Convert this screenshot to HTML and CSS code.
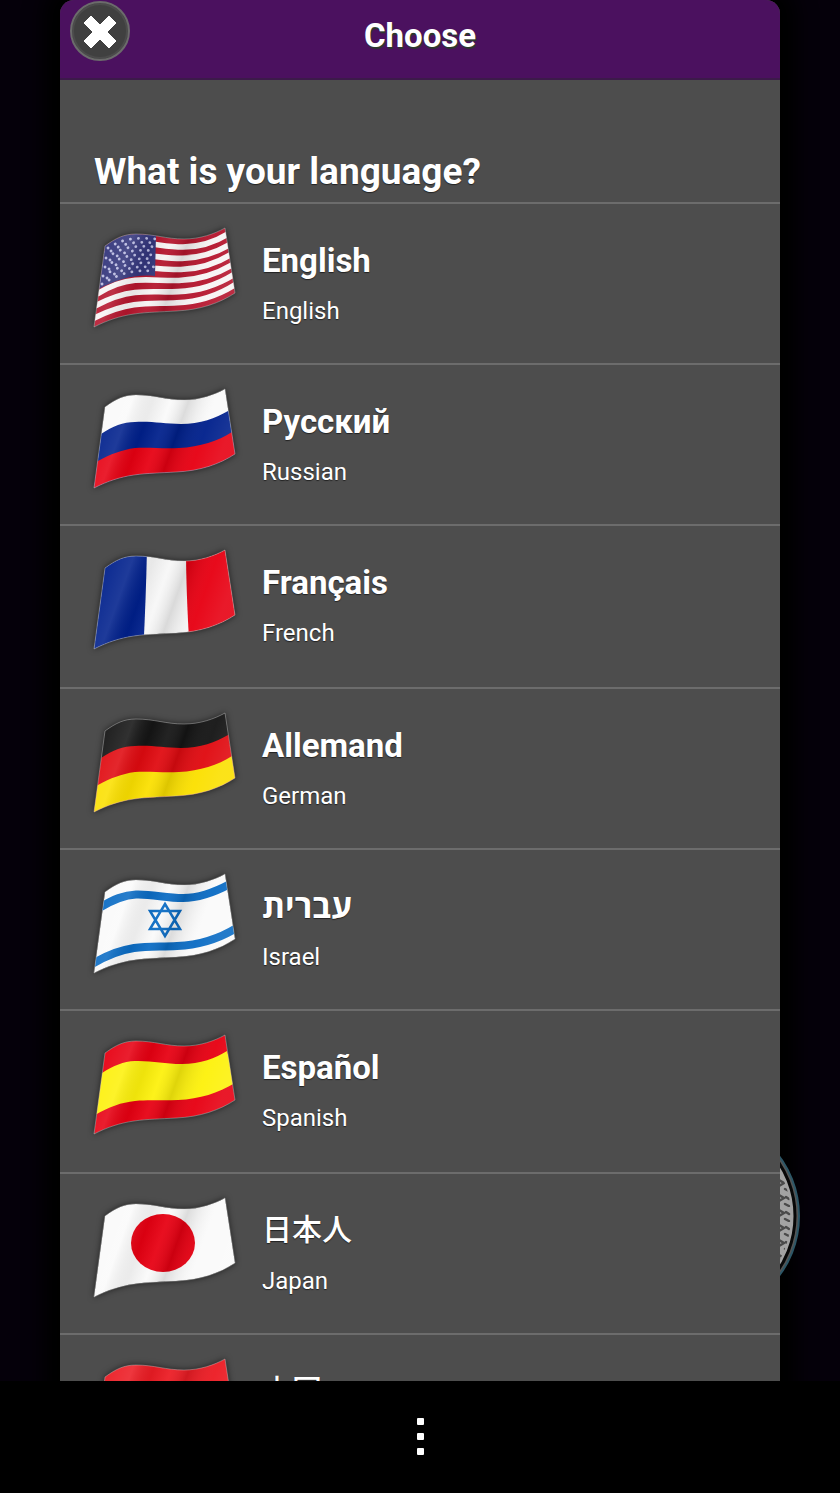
FILE: index.html
```html
<!DOCTYPE html>
<html lang="en">
<head>
<meta charset="utf-8">
<meta name="viewport" content="width=device-width, initial-scale=1">
<title>Choose</title>
<link rel="stylesheet" href="styles.css">
</head>
<body>
<svg class="defs" aria-hidden="true">
  <defs>
    <path id="cloth" d="M13 20C24 12 32 8 44 8C62 8 74 13 92 13C108 13 122 8 133 2L143 67C128 77 108 84 84 85C68 86 56 86 42 88C28 90 16 94 2 101Z"/>
    <clipPath id="wave"><use href="#cloth"/></clipPath>
    <path id="third1" d="M9 47C21 39 31 35 43 35C60 34 72 37 89 37C108 37 124 31 136 24L150 20V110H0V50Z"/>
    <path id="third2" d="M6 74C19 67 29 63 43 61C58 60 70 62 87 61C108 60 126 54 140 45L150 40V110H0V78Z"/>
    <linearGradient id="shade" x1="0" y1="0" x2="1" y2="0.25">
      <stop offset="0" stop-color="#fff" stop-opacity="0"/>
      <stop offset="0.28" stop-color="#fff" stop-opacity="0.12"/>
      <stop offset="0.42" stop-color="#000" stop-opacity="0.06"/>
      <stop offset="0.54" stop-color="#fff" stop-opacity="0.06"/>
      <stop offset="0.66" stop-color="#000" stop-opacity="0.12"/>
      <stop offset="0.84" stop-color="#fff" stop-opacity="0.04"/>
      <stop offset="1" stop-color="#fff" stop-opacity="0.1"/>
    </linearGradient>
    <g id="finish">
      <use href="#cloth" fill="url(#shade)"/>
      <use href="#cloth" fill="none" stroke="#ccc" stroke-opacity="0.4" stroke-width="1"/>
    </g>
  </defs>
</svg>

<div class="app">
  <main class="stage">
    <svg class="moon" viewBox="0 0 204 204" aria-hidden="true">
      <defs>
        <pattern id="engraving" width="14" height="15" patternUnits="userSpaceOnUse" patternTransform="translate(182 3)">
          <path d="M0 3L5 6L0 9M6 12L10 14M7 5L10 7" fill="none" stroke="#4a4a4a" stroke-width="2.5" stroke-linecap="round"/>
        </pattern>
      </defs>
      <circle cx="102" cy="102" r="100" fill="#555" stroke="#2d5666" stroke-width="2"/>
      <circle cx="102" cy="102" r="96" fill="#a3a3a3" stroke="#080808" stroke-width="3"/>
      <circle cx="102" cy="102" r="92" fill="url(#engraving)"/>
    </svg>
    <section class="dialog" aria-labelledby="dialog-title">
      <header class="dialog-header">
        <button class="close" type="button" aria-label="Close">
          <svg viewBox="0 0 56 56" aria-hidden="true"><path d="M19 13L28 22L37 13L44 20L35 29L44 38L37 45L28 36L19 45L12 38L21 29L12 20Z" fill="#fff" stroke="#fff" stroke-width="1" stroke-linejoin="round"/></svg>
        </button>
        <h1 id="dialog-title">Choose</h1>
      </header>
      <h2 class="question">What is your language?</h2>
      <ul class="languages">
        <li><button class="language" type="button">
          <svg class="flag" viewBox="0 0 148 108" aria-hidden="true">
            <g clip-path="url(#wave)">
              <use href="#cloth" fill="#b5152d"/>
              <g fill="none" stroke="#f7f4f4" stroke-width="5.6">
                <path d="M12 29C23 21 32 17.500 44 17C61 17 73 21 91 21C108 21 123 16 136 8"/>
                <path d="M10 42C22 34 31 30 43 29.500C60 29 72 32.500 90 32.400C108 32 124 26.600 138 18.500"/>
                <path d="M7 55C21 46.700 30 42.700 43 41.800C59 41 71 44 89 43.500C108 43 125 37 139 28.500"/>
                <path d="M5 68C19 59.300 30 55.300 43 54.200C59 53 71 55 87 54.500C108 54 125 47.800 141 38.500"/>
                <path d="M3 80C18 72 29 68 43 66.500C58 65 70 66.400 86 65.600C108 65 126 58.400 142 48.500"/>
                <path d="M0 93C17 84.600 28 80.600 42 78.800C57 77 69 77.600 85 76.700C108 75.800 127 69 144 58"/>
              </g>
              <path d="M13 20C24 12 32 8 44 8L64 9L63 50C44 48 25 53 5 64Z" fill="#33357b"/>
              <g fill="none" stroke="#b9bae0" stroke-width="2.8" stroke-linecap="round" stroke-dasharray="0.1 8">
                <path d="M16 22C30 13 42 11 63 13"/>
                <path d="M19 25C32 17 43 15 63 17"/>
                <path d="M14 32C30 21 42 19 63 21"/>
                <path d="M18 34C32 25 43 23 63 25"/>
                <path d="M13 41C30 29 42 28 63 29"/>
                <path d="M17 43C32 33 43 32 63 33"/>
                <path d="M11 50C30 38 42 36 63 37"/>
                <path d="M15 52C32 42 43 40 63 41"/>
                <path d="M10 58C30 46 42 44 63 45"/>
              </g>
            </g>
            <use href="#finish"/>
          </svg>
          <span class="names"><strong class="native">English</strong><span class="local">English</span></span>
        </button></li>
        <li><button class="language" type="button">
          <svg class="flag" viewBox="0 0 148 108" aria-hidden="true">
            <g clip-path="url(#wave)"><use href="#cloth" fill="#fafafa"/><use href="#third1" fill="#00208c"/><use href="#third2" fill="#e70012"/></g>
            <use href="#finish"/>
          </svg>
          <span class="names"><strong class="native" lang="ru">Русский</strong><span class="local">Russian</span></span>
        </button></li>
        <li><button class="language" type="button">
          <svg class="flag" viewBox="0 0 148 108" aria-hidden="true">
            <g clip-path="url(#wave)"><use href="#cloth" fill="#f7f7f7"/><path d="M0 0H55Q54 50 51 108H0Z" fill="#00208c"/><path d="M94 0Q94 45 98 108H148V0Z" fill="#e70012"/></g>
            <use href="#finish"/>
          </svg>
          <span class="names"><strong class="native" lang="fr">Français</strong><span class="local">French</span></span>
        </button></li>
        <li><button class="language" type="button">
          <svg class="flag" viewBox="0 0 148 108" aria-hidden="true">
            <g clip-path="url(#wave)"><use href="#cloth" fill="#151515"/><use href="#third1" fill="#e00a10"/><use href="#third2" fill="#fbe000"/></g>
            <use href="#finish"/>
          </svg>
          <span class="names"><strong class="native">Allemand</strong><span class="local">German</span></span>
        </button></li>
        <li><button class="language" type="button">
          <svg class="flag" viewBox="0 0 148 108" aria-hidden="true">
            <g clip-path="url(#wave)"><use href="#cloth" fill="#fafafa"/>
              <g fill="none" stroke="#0b6cc4">
                <path d="M7 36C22 27 32 23 44 22.500C61 22 73 26 91 26C108 26 123 20 138 12" stroke-width="8"/>
                <path d="M0 92C17 82 28 78 42 76C57 74 69 75 85 74C108 73 127 67 146 55" stroke-width="8"/>
                <path d="M73 32L88 57L58 57ZM73 64L58 39L88 39Z" stroke-width="2.5"/>
              </g>
            </g>
            <use href="#finish"/>
          </svg>
          <span class="names"><strong class="native" lang="he">עברית</strong><span class="local">Israel</span></span>
        </button></li>
        <li><button class="language" type="button">
          <svg class="flag" viewBox="0 0 148 108" aria-hidden="true">
            <g clip-path="url(#wave)"><use href="#cloth" fill="#e70012"/>
              <path d="M10 40C22 32.500 31 28.500 43 28C60 27.500 72 31 90 31C108 31 124 25 135 18L143 50C126 60 108 66 86 67C70 68 58 66.500 43 68C29 69.500 18 73.500 3 82Z" fill="#fdf10c"/></g>
            <use href="#finish"/>
          </svg>
          <span class="names"><strong class="native" lang="es">Español</strong><span class="local">Spanish</span></span>
        </button></li>
        <li><button class="language" type="button">
          <svg class="flag" viewBox="0 0 148 108" aria-hidden="true">
            <g clip-path="url(#wave)"><use href="#cloth" fill="#fafafa"/><ellipse cx="71" cy="47" rx="32" ry="29" fill="#e70012"/></g>
            <use href="#finish"/>
          </svg>
          <span class="names"><strong class="native cjk" lang="ja">日本人</strong><span class="local">Japan</span></span>
        </button></li>
        <li><button class="language" type="button">
          <svg class="flag" viewBox="0 0 148 108" aria-hidden="true">
            <use href="#cloth" fill="#ec1c24"/>
            <use href="#finish"/>
          </svg>
          <span class="names"><strong class="native cjk" lang="zh">中国</strong></span>
        </button></li>
      </ul>
    </section>
  </main>
  <nav class="system-bar">
    <button class="more" type="button" aria-label="More options"><i></i><i></i><i></i></button>
  </nav>
</div>
</body>
</html>
```
FILE: styles.css
```css
* {
  box-sizing: border-box;
}

body {
  margin: 0;
  background: #000;
  color: #fff;
  font-family: Roboto, "Noto Sans", "Open Sans", "DejaVu Sans", sans-serif;
}

button {
  margin: 0;
  padding: 0;
  border: 0;
  background: none;
  color: inherit;
  font: inherit;
  cursor: pointer;
}

.defs {
  position: absolute;
  width: 0;
  height: 0;
}

.app {
  display: flex;
  flex-direction: column;
  height: 100vh;
}

.stage {
  position: relative;
  flex: 1;
  min-height: 0;
  padding: 0 60px;
  overflow: hidden;
  background: #05000a;
}

.moon {
  position: absolute;
  right: 39px;
  bottom: 63px;
  z-index: 1;
  width: 204px;
  height: 204px;
}

.dialog {
  min-height: 100%;
  border-radius: 14px 14px 0 0;
  background: #4d4d4d;
  box-shadow: 0 0 20px 16px #000;
}

.dialog-header,
.question,
.languages {
  position: relative;
  z-index: 2;
  background: #4d4d4d;
}

.dialog-header {
  display: grid;
  grid-template-columns: 60px 1fr 60px;
  align-items: start;
  height: 80px;
  padding: 1px 10px 0;
  border-bottom: 2px solid #3c1a4a;
  border-radius: 14px 14px 0 0;
  background: #4b115f;
}

.close {
  width: 60px;
  height: 60px;
  border: 2px solid #6b6b6b;
  border-radius: 50%;
  background: #404040;
  box-shadow: inset 0 0 0 2px #4b4b4b;
}

.close svg {
  display: block;
  width: 100%;
}

.dialog-header h1 {
  margin: 0;
  padding-top: 15px;
  font-size: 33px;
  line-height: 40px;
  text-align: center;
  text-shadow: 1px 2px 1px #2c3a2c;
}

.question {
  margin: 0;
  padding: 68px 34px 6px;
  font-size: 37px;
  line-height: 48px;
  text-shadow: 0 1px 1px #222;
}

.languages {
  margin: 0;
  padding: 0;
  list-style: none;
}

.languages li {
  height: 161px;
  border-top: 2px solid #6c6c6c;
}

.languages li:nth-child(3n) {
  height: 163px;
}

.language {
  display: flex;
  align-items: flex-start;
  gap: 22px;
  width: 100%;
  height: 100%;
  padding: 22px 32px 0;
  text-align: left;
}

.flag {
  flex: none;
  width: 148px;
  height: 108px;
  filter: drop-shadow(0 0 3px rgba(0, 0, 0, 0.6));
}

.names {
  display: flex;
  flex-direction: column;
  gap: 15px;
  padding-top: 15px;
  text-shadow: 0 1px 1px #222;
}

.native {
  font-size: 33px;
  line-height: 40px;
}

.cjk {
  padding-bottom: 8px;
  font-family: "Noto Sans CJK JP", sans-serif;
  font-size: 30px;
  font-weight: 500;
  line-height: 32px;
}

.local {
  font-size: 24px;
  line-height: 30px;
}

.system-bar {
  display: flex;
  flex: none;
  justify-content: center;
  height: 112px;
  background: #000;
}

.more {
  display: flex;
  flex-direction: column;
  align-items: center;
  justify-content: center;
  gap: 8px;
  width: 64px;
  padding-bottom: 2px;
}

.more i {
  width: 7px;
  height: 7px;
  border-radius: 1px;
  background: #fff;
}
```
